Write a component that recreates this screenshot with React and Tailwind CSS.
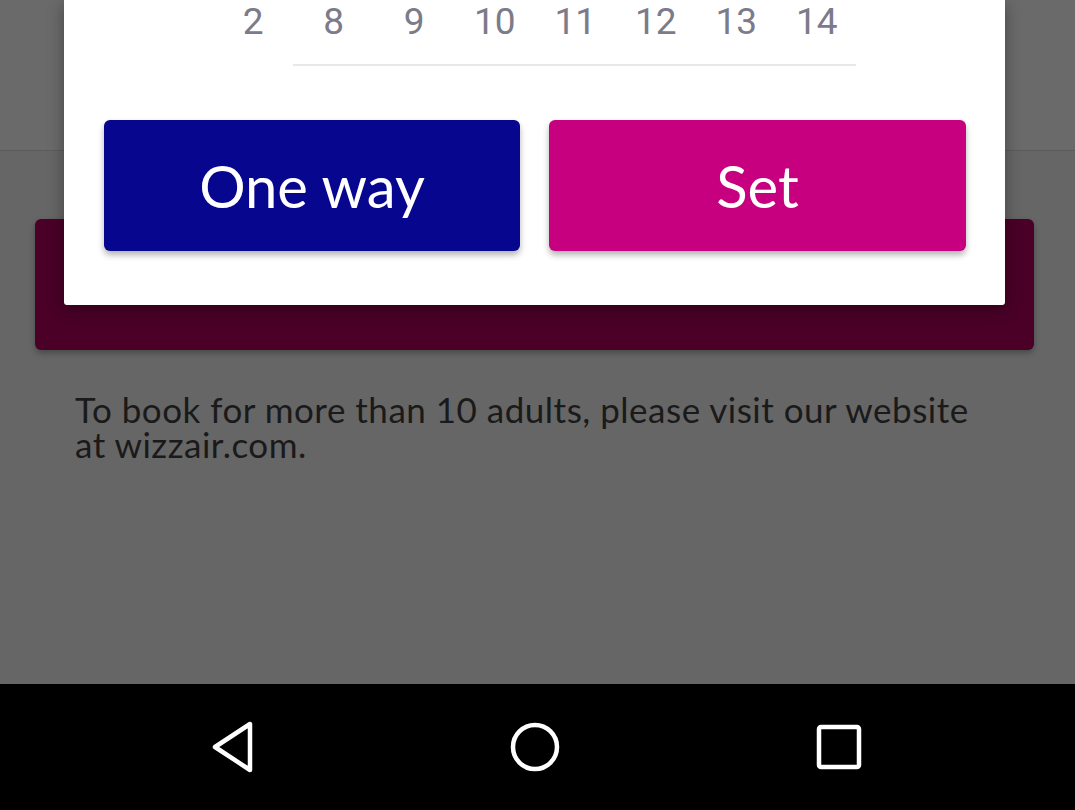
import React from "react";

export default function App() {
  const nums = ["2", "8", "9", "10", "11", "12", "13", "14"];
  return (
    <div className="relative w-[1075px] h-[810px] overflow-hidden bg-[#666666] flex flex-col" style={{ fontFamily: "Lato, 'Open Sans', sans-serif" }}>
      {/* underlying page */}
      <div className="h-[151px] bg-[#6a6a6a] border-b border-[#5c5c5c] shrink-0" />
      <div className="mt-[68px] ml-[35px] mr-[41px] h-[131px] rounded-[6px] bg-[#4a0027] shadow-[0_3px_6px_rgba(0,0,0,0.3)] shrink-0" />
      <p className="mt-[42px] ml-[75px] w-[910px] text-[35px] leading-[35px] text-[#1a1a1a] tracking-[0.5px]">
        To book for more than 10 adults, please visit our website at wizzair.com.
      </p>
      <div className="flex-1" />
      {/* nav bar */}
      <div className="h-[126px] bg-black flex items-center gap-[242px] pl-[203px] shrink-0">
        <div className="w-[60px] flex justify-center">
          <svg width="46" height="52" viewBox="0 0 46 52" fill="none" stroke="white" strokeWidth="4.5" strokeLinejoin="round">
            <path d="M40 3 L40 49 L5 26 Z" />
          </svg>
        </div>
        <div className="w-[60px] flex justify-center">
          <svg width="52" height="52" viewBox="0 0 52 52" fill="none" stroke="white" strokeWidth="4.5">
            <circle cx="26" cy="26" r="22" />
          </svg>
        </div>
        <div className="w-[60px] flex justify-center ml-[2px]">
          <svg width="46" height="46" viewBox="0 0 46 46" fill="none" stroke="white" strokeWidth="4.5" strokeLinejoin="round">
            <rect x="3" y="3" width="40" height="40" rx="2" />
          </svg>
        </div>
      </div>

      {/* dialog */}
      <div className="absolute left-[64px] top-0 w-[941px] bg-white rounded-b-[3px] shadow-[0_4px_16px_rgba(0,0,0,0.35)]">
        <div className="flex pl-[149px] h-[44px] items-center">
          {nums.map((n, i) => (
            <div key={i} className="w-[80.5px] text-center text-[37px] leading-[44px] text-[#7b7b8b]" style={{ fontFamily: "Roboto, sans-serif" }}>
              {n}
            </div>
          ))}
        </div>
        <div className="ml-[229px] w-[563px] h-[2px] bg-[#e8e8ec] mt-[20px]" />
        <div className="flex gap-[29px] pl-[40px] pr-[39px] mt-[54px] pb-[54px]">
          <div className="w-[416px] h-[131px] rounded-[6px] bg-[#06068f] flex items-center justify-center text-white text-[58px] shadow-[0_4px_6px_rgba(0,0,0,0.3)]">
            One way
          </div>
          <div className="w-[417px] h-[131px] rounded-[6px] bg-[#c6007e] flex items-center justify-center text-white text-[58px] shadow-[0_4px_6px_rgba(0,0,0,0.3)]">
            Set
          </div>
        </div>
      </div>
    </div>
  );
}
